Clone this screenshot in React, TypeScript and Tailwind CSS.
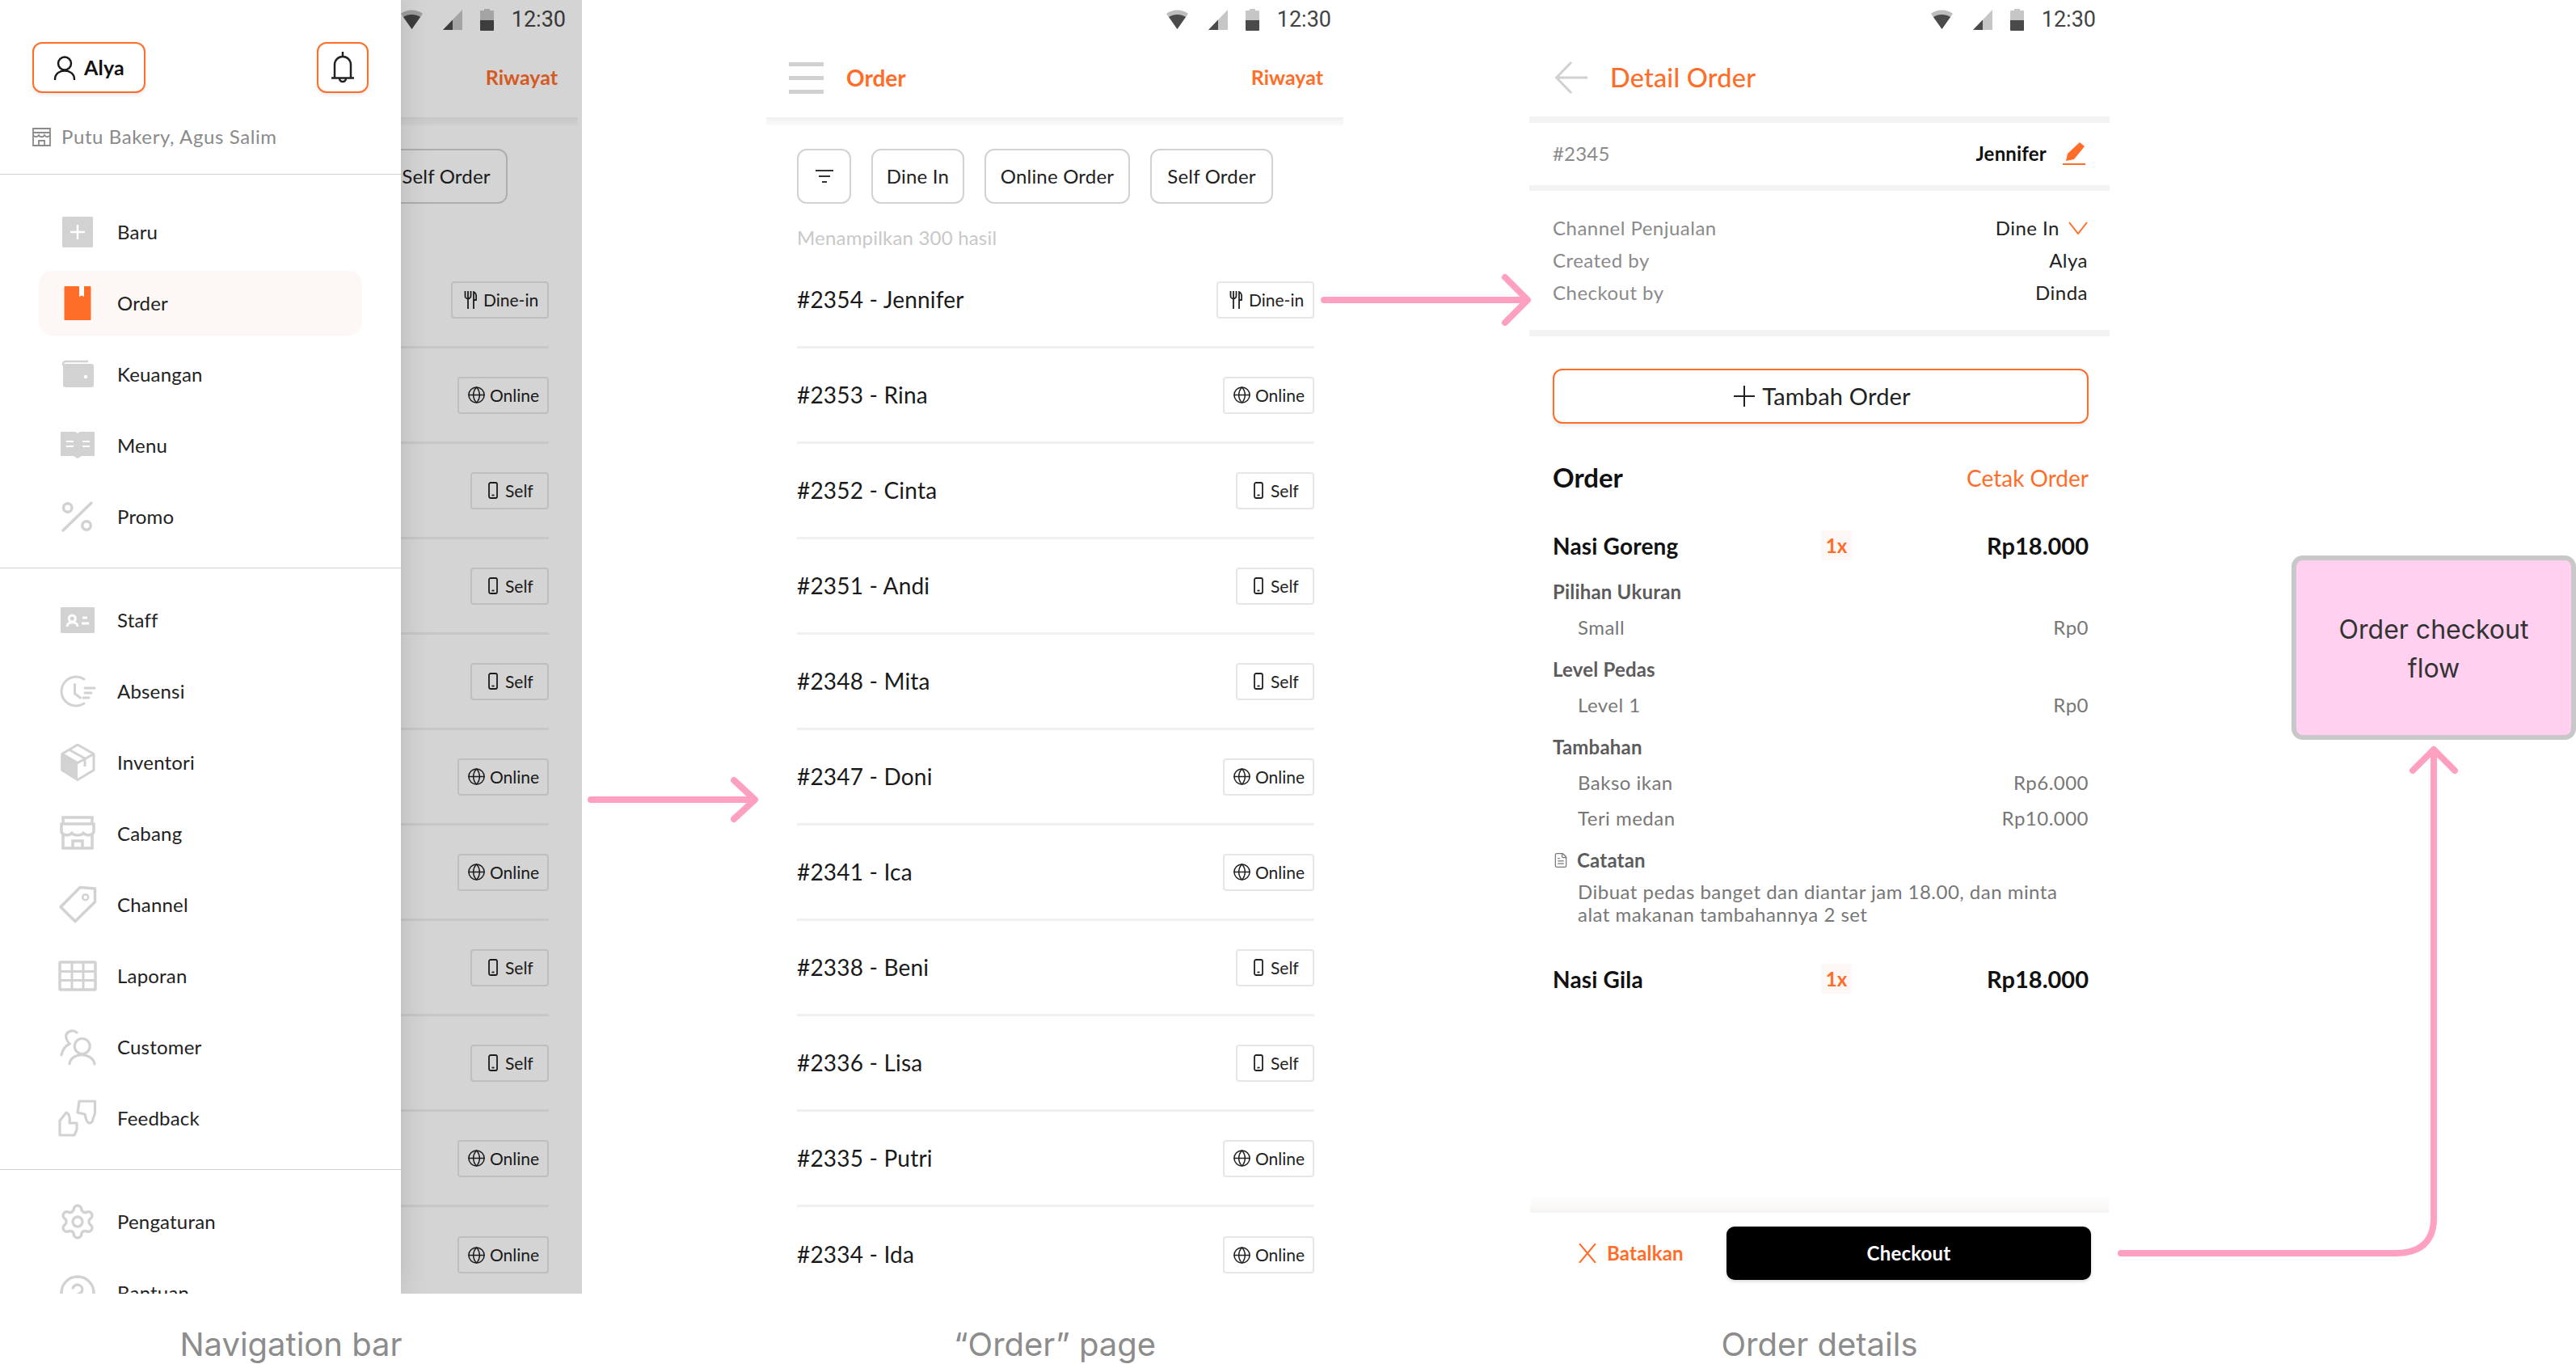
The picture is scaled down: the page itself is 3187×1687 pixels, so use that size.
import type { ReactNode } from 'react';
import { CircleHelp, FileText, Globe, Settings } from 'lucide-react';

type Channel = 'dine' | 'online' | 'self';

const ORDERS: { label: string; channel: Channel }[] = [
  { label: '#2354 - Jennifer', channel: 'dine' },
  { label: '#2353 - Rina', channel: 'online' },
  { label: '#2352 - Cinta', channel: 'self' },
  { label: '#2351 - Andi', channel: 'self' },
  { label: '#2348 - Mita', channel: 'self' },
  { label: '#2347 - Doni', channel: 'online' },
  { label: '#2341 - Ica', channel: 'online' },
  { label: '#2338 - Beni', channel: 'self' },
  { label: '#2336 - Lisa', channel: 'self' },
  { label: '#2335 - Putri', channel: 'online' },
  { label: '#2334 - Ida', channel: 'online' },
];

function NavSvg({ children }: { children: ReactNode }) {
  return (
    <svg width="48" height="48" viewBox="0 0 48 48" fill="none" className="shrink-0">
      {children}
    </svg>
  );
}

const G = '#d2d2d2';

const NAV_TOP: { label: string; icon: ReactNode; active?: boolean }[] = [
  {
    label: 'Baru',
    icon: (
      <NavSvg>
        <rect x="5" y="5" width="38" height="38" rx="1.5" fill={G} />
        <path d="M24 15v18M15 24h18" stroke="#fff" strokeWidth="2.5" />
      </NavSvg>
    ),
  },
  {
    label: 'Order',
    active: true,
    icon: (
      <NavSvg>
        <rect x="7.5" y="3" width="33" height="42" rx="1" fill="#ff6d28" />
        <path d="M26 3h6v13l-3-1.5-3 1.5z" fill="#fff" />
      </NavSvg>
    ),
  },
  {
    label: 'Keuangan',
    icon: (
      <NavSvg>
        <path d="M6 12c0-3 1-4 4-4h26" stroke={G} strokeWidth="2.5" strokeLinecap="round" />
        <rect x="6" y="11" width="38" height="29" rx="3" fill={G} />
        <circle cx="34" cy="27" r="2.2" fill="#fff" />
      </NavSvg>
    ),
  },
  {
    label: 'Menu',
    icon: (
      <NavSvg>
        <path d="M3 7h18l3 2 3-2h18v30H29l-5 3-5-3H3z" fill={G} />
        <path d="M10 19h9M10 25h9M30 19h9M30 25h9" stroke="#fff" strokeWidth="2.2" />
      </NavSvg>
    ),
  },
  {
    label: 'Promo',
    icon: (
      <NavSvg>
        <path d="M41 7 6 41" stroke={G} strokeWidth="3.5" strokeLinecap="round" />
        <circle cx="11.7" cy="13" r="5.2" stroke={G} strokeWidth="3.5" />
        <circle cx="35" cy="35" r="5.2" stroke={G} strokeWidth="3.5" />
      </NavSvg>
    ),
  },
];

const NAV_MID: { label: string; icon: ReactNode }[] = [
  {
    label: 'Staff',
    icon: (
      <NavSvg>
        <rect x="3" y="8" width="42" height="32" rx="1" fill={G} />
        <circle cx="17.3" cy="22" r="4" stroke="#fff" strokeWidth="3" />
        <path d="M11 32c0-7 13-7 13 0" stroke="#fff" strokeWidth="3" />
        <path d="M30 21h6M29 28h9" stroke="#fff" strokeWidth="3" />
      </NavSvg>
    ),
  },
  {
    label: 'Absensi',
    icon: (
      <NavSvg>
        <path d="M32 9A18 18 0 1 0 32 39" stroke={G} strokeWidth="3" strokeLinecap="round" />
        <path d="M20.5 15.5V27l7 5" stroke={G} strokeWidth="3" strokeLinecap="round" />
        <path d="M33 20h12M33 26h8M31 32h7" stroke={G} strokeWidth="3" strokeLinecap="round" />
      </NavSvg>
    ),
  },
  {
    label: 'Inventori',
    icon: (
      <NavSvg>
        <path d="M4.7 13.3 24 24.5v21L4.7 33.5z" fill={G} />
        <path d="M24 2 44 13.5v20L24 45.5 4.7 33.5v-20z" stroke={G} strokeWidth="3" strokeLinejoin="round" />
        <path d="M4.7 13.3 24 24.5l20-11M13 8l20 11v10" stroke={G} strokeWidth="3" strokeLinejoin="round" />
      </NavSvg>
    ),
  },
  {
    label: 'Cabang',
    icon: (
      <NavSvg>
        <path d="M6 12V4h36v8M6 26v16h36V26" stroke={G} strokeWidth="3.5" />
        <path d="M4 12h40v10c-2 5-10 5-13 1-2 4-12 4-14 0-3 4-11 4-13-1z" stroke={G} strokeWidth="3.5" strokeLinejoin="round" />
        <path d="M18 42v-9h12v9" stroke={G} strokeWidth="3.5" />
      </NavSvg>
    ),
  },
  {
    label: 'Channel',
    icon: (
      <NavSvg>
        <path d="M27 2.5 45.5 4v16.5l-24.5 24L3 26.7z" stroke={G} strokeWidth="3.5" strokeLinejoin="round" />
        <circle cx="33.7" cy="14.7" r="3.5" stroke={G} strokeWidth="2.5" />
      </NavSvg>
    ),
  },
  {
    label: 'Laporan',
    icon: (
      <NavSvg>
        <rect x="2" y="7" width="44" height="34" stroke={G} strokeWidth="3.5" rx="1" />
        <path d="M2 18.5h44M2 29.5h44M17 7v34M31 7v34" stroke={G} strokeWidth="3" />
      </NavSvg>
    ),
  },
  {
    label: 'Customer',
    icon: (
      <NavSvg>
        <circle cx="29.7" cy="23" r="9.5" stroke={G} strokeWidth="3.2" />
        <path d="M14 45c1-15 29-15 31 0" stroke={G} strokeWidth="3.2" strokeLinecap="round" />
        <path d="M23 6c-6-5-15 0-13 7 .7 3 2 5 4 7-5 2-9 8-10 14" stroke={G} strokeWidth="3.2" strokeLinecap="round" />
      </NavSvg>
    ),
  },
  {
    label: 'Feedback',
    icon: (
      <NavSvg>
        <path d="M2 45V27l8-10c3 1 5 5 4 13h9v8l-3 7z" stroke={G} strokeWidth="3.2" strokeLinejoin="round" />
        <path d="M45.5 3H26l-2 14 9 2c1 4 1 9 5 11 3 0 5-2 5-5l2.500-7z" stroke={G} strokeWidth="3.2" strokeLinejoin="round" />
      </NavSvg>
    ),
  },
];

function NavRow({ label, icon, active }: { label: string; icon: ReactNode; active?: boolean }) {
  return (
    <div className="h-[88px] flex items-center">
      <div
        className={`ml-[48px] w-[400px] h-[80px] rounded-[16px] flex items-center pl-[24px] gap-[25px] ${
          active ? 'bg-[#fdf8f5]' : ''
        }`}
      >
        {icon}
        <span className="text-[24px] text-[#222]">{label}</span>
      </div>
    </div>
  );
}

function StatusBar() {
  return (
    <div className="h-[48px] flex items-center justify-end pr-[18px] shrink-0">
      <svg width="27" height="24" viewBox="0 0 27 24" className="mr-[25px]">
        <path d="M0 5C7-1 20-1 27 5L13.500 24z" fill="#bdbdbd" />
        <path d="M3 9c6-4 15-4 21 0L13.500 24z" fill="#4a4a4a" />
      </svg>
      <svg width="24" height="25" viewBox="0 0 24 25" className="mr-[22px]">
        <path d="M24 0v25H0z" fill="#c6c6c6" />
        <path d="M12 12.500V25H0z" fill="#4a4a4a" />
      </svg>
      <svg width="17" height="27" viewBox="0 0 17 27" className="mr-[22px]">
        <path d="M5 0h7v2h4a1 1 0 0 1 1 1v23a1 1 0 0 1-1 1H1a1 1 0 0 1-1-1V3a1 1 0 0 1 1-1h4z" fill="#c6c6c6" />
        <path d="M0 14h17v12a1 1 0 0 1-1 1H1a1 1 0 0 1-1-1z" fill="#4a4a4a" />
      </svg>
      <span className="font-['Roboto',sans-serif] tracking-normal text-[27px] leading-none text-[#444]">12:30</span>
    </div>
  );
}

function ChannelBadge({ channel }: { channel: Channel }) {
  const base =
    'h-[46px] border-2 border-[#e6e6e6] rounded-[4px] flex items-center text-[21px] tracking-normal text-[#222] bg-white';
  if (channel === 'dine') {
    return (
      <div className={`${base} w-[121px] pl-[14px] gap-[8px]`}>
        <svg width="16" height="22" viewBox="0 0 16 22" fill="none" stroke="#222" strokeWidth="1.8">
          <path d="M1.500 0v6a3.500 3.500 0 0 0 7 0V0M5 0v22M12 22V1c3 1 3.500 6 3 10h-3" />
        </svg>
        Dine-in
      </div>
    );
  }
  if (channel === 'online') {
    return (
      <div className={`${base} w-[113px] pl-[10px] gap-[5px]`}>
        <Globe size={23} strokeWidth={1.6} color="#222" />
        Online
      </div>
    );
  }
  return (
    <div className={`${base} w-[97px] pl-[20px] gap-[9px] tracking-[0.03em]`}>
      <svg width="12" height="21" viewBox="0 0 12 21" fill="none" stroke="#222" strokeWidth="1.8">
        <rect x="1" y="1" width="10" height="19" rx="2" />
        <path d="M4.500 16.500h3" />
      </svg>
      Self
    </div>
  );
}

function OrderScreen({ covered = false }: { covered?: boolean }) {
  return (
    <div className={`w-[720px] h-[1600px] overflow-hidden bg-white flex flex-col ${covered ? '-ml-[2px]' : ''}`}>
      <StatusBar />
      <div className="h-[97px] flex items-center pl-[31px] pr-[28px] shrink-0">
        <div className="w-[43px] flex flex-col gap-[12px]">
          <div className="h-[5px] bg-[#d0d0d0]" />
          <div className="h-[5px] bg-[#d0d0d0]" />
          <div className="h-[5px] bg-[#d0d0d0]" />
        </div>
        <span className="ml-[28px] mb-[2px] text-[28px] font-bold tracking-normal text-[#ff6d28]">
          {covered ? '' : 'Order'}
        </span>
        <span className="ml-auto mb-[2px] text-[25px] font-bold tracking-normal text-[#ff6d28]">Riwayat</span>
      </div>
      <div className="h-[10px] mx-[3px] shrink-0 bg-linear-to-b from-[#f0f0f0] to-[#fafafa]" />

      <div className="mt-[29px] ml-[41px] flex gap-[25px] shrink-0">
        <div className="w-[67px] h-[68px] border-2 border-[#d2d2d2] rounded-[12px] flex items-center justify-center bg-white">
          <svg width="22" height="16" viewBox="0 0 22 16" fill="none" stroke="#333" strokeWidth="2">
            <path d="M0 1h22M4 8h14M8 15h6" />
          </svg>
        </div>
        {[
          { label: 'Dine In', width: 'w-[115px]' },
          { label: 'Online Order', width: 'w-[180px]' },
          { label: 'Self Order', width: 'w-[152px]' },
        ].map(f => (
          <div
            key={f.label}
            className={`${f.width} h-[68px] border-2 border-[#d2d2d2] rounded-[12px] flex items-center justify-center text-[24px] text-[#222] bg-white`}
          >
            {covered && f.label !== 'Self Order' ? '' : f.label}
          </div>
        ))}
      </div>

      <div className="mt-[28px] ml-[41px] h-[28px] leading-[28px] text-[24px] text-[#c8c8c8] shrink-0">
        {covered ? '' : 'Menampilkan 300 hasil'}
      </div>

      <div className="mt-[5px] mx-[41px] w-[640px] shrink-0">
        {ORDERS.map(order => (
          <div
            key={order.label}
            className="h-[118px] flex items-center justify-between border-b-[3px] border-[#f0f0f0] last:border-b-0"
          >
            <span className="mb-[2px] text-[28px] text-[#1a1a1a]">{covered ? '' : order.label}</span>
            <ChannelBadge channel={order.channel} />
          </div>
        ))}
      </div>
    </div>
  );
}

function NavScreen() {
  return (
    <div className="relative w-[720px] h-[1600px] overflow-hidden bg-white">
      <OrderScreen covered />
      <div className="absolute inset-0 bg-[#000000]/[0.17]" />
      <div className="absolute left-0 top-0 w-[496px] h-full bg-white overflow-hidden shadow-[0_0_36px_rgba(0,0,0,0.14)]">
        <div className="pt-[52px] pl-[40px] pr-[40px] flex justify-between">
          <div className="w-[140px] h-[63px] border-2 border-[#ff6d28] rounded-[12px] flex items-center pl-[24px] gap-[10px] shadow-[0_2px_4px_rgba(0,0,0,0.1)]">
            <svg width="28" height="30" viewBox="0 0 28 30" fill="none" stroke="#1a1a1a" strokeWidth="2.5">
              <circle cx="14" cy="9.500" r="8" />
              <path d="M2 29c0-14 24-14 24 0" strokeLinecap="round" />
            </svg>
            <span className="text-[25px] font-bold text-[#111]">Alya</span>
          </div>
          <div className="w-[64px] h-[63px] border-2 border-[#ff6d28] rounded-[12px] flex items-center justify-center shadow-[0_2px_4px_rgba(0,0,0,0.1)]">
            <svg width="30" height="39" viewBox="0 0 30 39" fill="none" stroke="#222" strokeWidth="2.5">
              <path d="M15 0v5M5 32V16a10 10 0 0 1 20 0v16M1 32.500h28M11 33a4 4 0 0 0 8 0" />
            </svg>
          </div>
        </div>
        <div className="mt-[42px] ml-[40px] h-[24px] flex items-center gap-[13px] text-[24px] tracking-[0.025em] text-[#8a8a8a]">
          <svg width="23" height="23" viewBox="0 0 23 23" fill="none" stroke="#8a8a8a" strokeWidth="1.8">
            <path d="M1 1h21v21H1zM1 6h21M1 9c2 3 5 3 7 0 1 3 6 3 7 0 2 3 5 3 7 0M8 22v-6h7v6" />
          </svg>
          Putu Bakery, Agus Salim
        </div>
        <div className="mt-[34px] h-px bg-[#d0d0d0]" />

        <div className="pt-[27px] pb-[19px]">
          {NAV_TOP.map(item => (
            <NavRow key={item.label} {...item} />
          ))}
        </div>
        <div className="h-px bg-[#d0d0d0]" />
        <div className="pt-[20px] pb-[19px]">
          {NAV_MID.map(item => (
            <NavRow key={item.label} {...item} />
          ))}
        </div>
        <div className="h-px bg-[#d0d0d0]" />
        <div className="pt-[20px]">
          <NavRow label="Pengaturan" icon={<Settings size={48} strokeWidth={1.7} color={G} />} />
          <NavRow label="Bantuan" icon={<CircleHelp size={48} strokeWidth={1.7} color={G} />} />
        </div>
      </div>
    </div>
  );
}

function Band({ className }: { className: string }) {
  return <div className={`${className} mx-px shrink-0 bg-[#f3f3f3]`} />;
}

function InfoRow({ label, children }: { label: string; children: ReactNode }) {
  return (
    <div className="h-[40px] flex items-center justify-between text-[24px] tracking-[0.02em]">
      <span className="text-[#8a8a8a]">{label}</span>
      {children}
    </div>
  );
}

function ItemHead({ name, className }: { name: string; className: string }) {
  return (
    <div className={`${className} h-[37px] grid grid-cols-[332px_38px_1fr] items-center`}>
      <span className="text-[28px] font-bold text-[#111]">{name}</span>
      <span className="h-[37px] bg-[#fdf8f5] flex items-center justify-center text-[24px] font-bold tracking-normal text-[#ff6d28]">
        1x
      </span>
      <span className="text-right text-[29px] font-bold tracking-normal text-[#111]">Rp18.000</span>
    </div>
  );
}

function OptionTitle({ children, className = '' }: { children: ReactNode; className?: string }) {
  return <div className={`${className} h-[44px] flex items-center text-[24px] font-bold text-[#5c5c5c]`}>{children}</div>;
}

function OptionRow({ name, price }: { name: string; price: string }) {
  return (
    <div className="h-[44px] pl-[31px] flex items-center justify-between text-[24px] tracking-[0.02em] text-[#777]">
      <span>{name}</span>
      <span>{price}</span>
    </div>
  );
}

function DetailScreen() {
  return (
    <div className="w-[720px] h-[1600px] overflow-hidden bg-white flex flex-col">
      <StatusBar />
      <div className="h-[96px] flex items-center pl-[33px] shrink-0">
        <svg width="40" height="40" viewBox="0 0 40 40" fill="none" stroke="#d0d0d0" strokeWidth="3">
          <path d="M40 20H2M20 1 1.500 20 20 39" />
        </svg>
        <span className="ml-[28px] text-[32.5px] font-medium text-[#ff6d28]">Detail Order</span>
      </div>
      <Band className="h-[8px]" />
      <div className="h-[77px] pb-[2px] shrink-0 pl-[30px] pr-[31px] flex items-center justify-between text-[24px]">
        <span className="text-[#8a8a8a]">#2345</span>
        <div className="flex items-center gap-[20px]">
          <span className="font-bold text-[#111]">Jennifer</span>
          <svg width="28" height="28" viewBox="0 0 28 28" fill="#ff6d28">
            <path d="M21 0l6 5-13 16-10 2 2-9z" />
            <rect y="26" width="28" height="2" />
          </svg>
        </div>
      </div>
      <Band className="h-[7px]" />
      <div className="pl-[30px] pr-[28px] py-[26px] shrink-0">
        <InfoRow label="Channel Penjualan">
          <div className="flex items-center gap-[11px] text-[#222]">
            Dine In
            <svg width="24" height="16" viewBox="0 0 24 16" fill="none" stroke="#ff6d28" strokeWidth="2">
              <path d="M1 1l11 14L23 1" />
            </svg>
          </div>
        </InfoRow>
        <InfoRow label="Created by">
          <span className="text-[#222]">Alya</span>
        </InfoRow>
        <InfoRow label="Checkout by">
          <span className="text-[#222]">Dinda</span>
        </InfoRow>
      </div>
      <Band className="h-[8px]" />

      <div className="flex-1 pl-[30px] pr-[27px]">
        <div className="mt-[40px] h-[68px] pl-[4px] border-2 border-[#ff6d28] rounded-[12px] flex items-center justify-center gap-[9px] text-[29px] text-[#222] shadow-[0_3px_5px_rgba(0,0,0,0.08)]">
          <svg width="26" height="26" viewBox="0 0 26 26" fill="none" stroke="#222" strokeWidth="2">
            <path d="M13 0v26M0 13h26" />
          </svg>
          Tambah Order
        </div>
        <div className="mt-[47px] h-[40px] flex items-center justify-between">
          <span className="text-[33px] font-bold tracking-normal text-[#111]">Order</span>
          <span className="text-[28px] tracking-normal text-[#ff6d28]">Cetak Order</span>
        </div>

        <ItemHead name="Nasi Goreng" className="mt-[42px]" />
        <OptionTitle className="mt-[20px]">Pilihan Ukuran</OptionTitle>
        <OptionRow name="Small" price="Rp0" />
        <OptionTitle className="mt-[8px]">Level Pedas</OptionTitle>
        <OptionRow name="Level 1" price="Rp0" />
        <OptionTitle className="mt-[8px]">Tambahan</OptionTitle>
        <OptionRow name="Bakso ikan" price="Rp6.000" />
        <OptionRow name="Teri medan" price="Rp10.000" />
        <OptionTitle className="mt-[8px] gap-[10px]">
          <FileText size={20} strokeWidth={1.5} color="#777" />
          Catatan
        </OptionTitle>
        <p className="mt-[3px] pl-[31px] w-[640px] text-[24px] tracking-[0.02em] leading-[28px] text-[#777]">
          Dibuat pedas banget dan diantar jam 18.00, dan minta alat makanan tambahannya 2 set
        </p>
        <ItemHead name="Nasi Gila" className="mt-[44px]" />
      </div>

      <div className="h-[22px] mx-[2px] shrink-0 bg-linear-to-b from-[#ffffff] to-[#f7f5f3]" />
      <div className="h-[100px] shrink-0 flex items-center pl-[62px] pr-[24px]">
        <svg width="22" height="24" viewBox="0 0 22 24" fill="none" stroke="#ff6d28" strokeWidth="2">
          <path d="M1 0l20 24M21 0 1 24" />
        </svg>
        <span className="ml-[13px] text-[24px] font-bold text-[#ff6d28]">Batalkan</span>
        <div className="ml-auto w-[451px] h-[66px] rounded-[10px] bg-black flex items-center justify-center text-[24px] font-bold text-white shadow-[0_2px_4px_rgba(0,0,0,0.15)]">
          Checkout
        </div>
      </div>
    </div>
  );
}

function Caption({ children }: { children: ReactNode }) {
  return (
    <div className="mt-[40px] h-[46px] leading-[46px] text-center font-['Inter',sans-serif] tracking-normal text-[40px] text-[#8c8c8c]">
      {children}
    </div>
  );
}

function Arrows() {
  return (
    <svg
      className="absolute inset-0 pointer-events-none"
      width="3187"
      height="1687"
      viewBox="0 0 3187 1687"
      fill="none"
      stroke="#ffa0c0"
      strokeWidth="8"
      strokeLinecap="round"
      strokeLinejoin="round"
    >
      <path d="M731 989H933M908 965l26 24-26 24" />
      <path d="M1638 371H1888M1862 343l28 28-28 28" />
      <path d="M2624 1550H2963C2995 1550 3011 1535 3011 1507V930M2985 953l26-26 26 26" />
    </svg>
  );
}

export default function App() {
  return (
    <div className="relative w-[3187px] h-[1687px] overflow-hidden bg-white flex font-['Lato',sans-serif] tracking-[0.012em]">
      <div className="w-[720px] shrink-0">
        <NavScreen />
        <Caption>Navigation bar</Caption>
      </div>
      <div className="w-[720px] ml-[225px] shrink-0">
        <OrderScreen />
        <Caption>“Order” page</Caption>
      </div>
      <div className="w-[720px] ml-[226px] shrink-0">
        <DetailScreen />
        <Caption>Order details</Caption>
      </div>
      <div className="ml-[224px] mt-[687px] w-[352px] h-[228px] pt-[4px] shrink-0 border-[6px] border-[#c8c8c8] rounded-[14px] bg-[#ffd0f0] flex items-center justify-center text-center font-['Inter',sans-serif] tracking-normal text-[32px] leading-[48px] text-[#333]">
        <p>
          Order checkout
          <br />
          flow
        </p>
      </div>
      <Arrows />
    </div>
  );
}
